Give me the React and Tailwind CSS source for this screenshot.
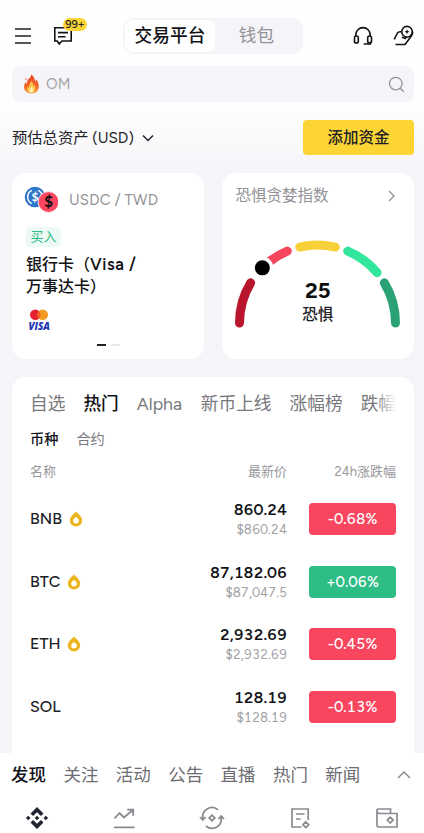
const GRAY = '#929297';

const polar = (deg) => {
  const a = (deg * Math.PI) / 180;
  return [82.5 - 78 * Math.cos(a), 86 - 78 * Math.sin(a)];
};
const arc = (from, to) => {
  const [x1, y1] = polar(from);
  const [x2, y2] = polar(to);
  return `M${x1} ${y1}A78 78 0 0 1 ${x2} ${y2}`;
};

function Gauge() {
  const segments = [
    [0, 31, '#b9152c'],
    [50, 67.2, '#f6465d'],
    [76.8, 103.2, '#f8d13a'],
    [112.8, 139.8, '#32e69b'],
    [149, 180, '#2ba275'],
  ];
  const [kx, ky] = polar(45);
  return (
    <svg width="165" height="92" viewBox="0 0 165 92" fill="none" className="block">
      {segments.map(([a, b, c]) => (
        <path key={c} d={arc(a, b)} stroke={c} strokeWidth="9" strokeLinecap="round" />
      ))}
      <circle cx={kx} cy={ky} r="11" fill="#fff" />
      <circle cx={kx} cy={ky} r="7.5" fill="#000" />
    </svg>
  );
}

function Header() {
  return (
    <header className="flex h-[36px] items-center pl-[14px] pr-[10px]">
      <svg width="18" height="18" viewBox="0 0 18 18" stroke="#202126" strokeWidth="1.6">
        <path d="M1 2h16M1 9h16M1 16h16" />
      </svg>
      <div className="relative ml-[21px] h-[20px] w-[20px]">
        <svg width="20" height="20" viewBox="0 0 20 20" fill="none" stroke="#111216" strokeWidth="1.6">
          <path d="M1.800 1.800h16.400v13.200h-9.200l-2.800 2.900-2-2.900H1.800zM5 6.600h10M5 10.700h7.500" />
        </svg>
        <span className="absolute left-[10px] top-[-8px] flex h-[13px] w-[24px] items-center justify-center rounded-full bg-[#fcd535] text-[11px] font-medium leading-none text-[#202126]">99+</span>
      </div>
      <div className="ml-[50px] flex h-[36px] w-[180px] rounded-[10px] bg-[#f5f4f8] p-[2px] text-[17.700px]">
        <div className="flex w-[90px] items-center justify-center rounded-[8px] bg-white font-medium text-[#111216]">交易平台</div>
        <div className="flex flex-1 items-center justify-center pr-[3px] text-[#929297]">钱包</div>
      </div>
      <svg className="ml-auto" width="20" height="20" viewBox="0 0 20 20" fill="none" stroke="#111216" strokeWidth="1.600">
        <path d="M2.800 10V8.800a7.200 7.200 0 0 1 14.400 0V10M17.300 15.800v2.200h-6.600" />
        <rect x="1.500" y="10" width="3.800" height="7" rx="1.800" />
        <rect x="14.700" y="10" width="3.800" height="7" rx="1.800" />
      </svg>
      <svg className="ml-[20px]" width="21" height="22" viewBox="0 0 21 22" fill="none" stroke="#111216" strokeWidth="1.600" strokeLinejoin="round">
        <path d="M1.200 14.300 4.500 8Q5.400 6.700 7 6.700h1.600M9 12.200l3.300 1.400 1.300-1.700M2.500 19.500H12l6.200-8.200q1.500-2.300 1.500-4.600" />
        <circle cx="14" cy="6.700" r="5.300" />
        <path d="m14 4.200.75 1.750 1.750.75-1.750.75L14 9.200l-.75-1.750-1.750-.75 1.750-.75z" fill="#111216" stroke="none" />
      </svg>
    </header>
  );
}

function SearchBar() {
  return (
    <div className="ml-[12px] mr-[10px] mt-[12px] flex h-[36px] items-center rounded-[8px] bg-[#f5f4f8] pl-[11px] pr-[9px]">
      <svg width="17" height="20" viewBox="0 0 17 20">
        <defs>
          <linearGradient id="flame" x1="0" y1="0" x2="0" y2="1">
            <stop offset="0" stopColor="#e84b2c" />
            <stop offset=".6" stopColor="#f4642b" />
            <stop offset="1" stopColor="#f89a35" />
          </linearGradient>
        </defs>
        <path d="M8 .5c3.400 2 3.600 4.600 4.200 7 .6-.6.8-1.400.8-2.200 2 2.400 3 5 2.800 7.500-.3 4-3.300 6.700-7.200 6.700S1 17 1 13.100c0-2.200.8-3.900 1.700-5.200.2.9.5 1.500 1 2C4 7 4.600 5.600 6.300 4.300 7.500 3.200 8.200 2 8 .5zM2.300 3.700l1.400 1.500-1.200 1.200z" fill="url(#flame)" />
        <path d="M8.200 7c2 1.900 1.600 3.500 2.300 4.700.6-.3.900-.9 1-1.500 2 3.900.8 8.500-3 8.500-3.700 0-5-3.200-3.800-6.300.4.700.8 1 1.300 1.100C5.800 10.800 7.500 9.500 8.200 7z" fill="#fcc544" />
        <path d="M8.500 12.500c1.800 2 2.800 6-.1 6-2.600 0-2.500-3-.6-4.200z" fill="#fff3ba" />
      </svg>
      <span className="ml-[6px] text-[15px] text-[#a4a4a9]">OM</span>
      <svg className="ml-auto" width="17" height="17" viewBox="0 0 17 17" fill="none" stroke={GRAY} strokeWidth="1.300">
        <circle cx="7.800" cy="7.600" r="6.300" />
        <path d="m12.300 12.200 3.500 3.500" />
      </svg>
    </div>
  );
}

function BuyCard() {
  return (
    <section className="flex h-[186px] w-[192px] flex-col rounded-[14px] bg-white pl-[14px] pt-[13px]">
      <div className="flex h-[29px] items-center">
        <svg width="34" height="29" viewBox="0 0 34 29" className="-ml-[2px]">
          <circle cx="11" cy="11" r="10.300" fill="#2f76ca" />
          <path d="M7.800 4.300a7.500 7.500 0 0 0 0 13.400M14.200 4.300a7.500 7.500 0 0 1 0 13.400" fill="none" stroke="#fff" strokeWidth="1.400" />
          <text x="11" y="15.300" textAnchor="middle" fontSize="12" fontWeight="700" fontFamily="Lato, sans-serif" fill="#fff">$</text>
          <circle cx="24.500" cy="16" r="10.400" fill="#fa465f" stroke="#fff" strokeWidth=".8" />
          <text x="24.500" y="21" textAnchor="middle" fontSize="15" fontWeight="900" fontFamily="Lato, sans-serif" fill="#111">$</text>
        </svg>
        <span className="ml-[11px] text-[15px] tracking-[.2px] text-[#929297]">USDC / TWD</span>
      </div>
      <div className="mt-[12px] flex h-[20px] w-[35px] items-center justify-center rounded-[4px] bg-[#edf9f4] text-[13px] text-[#2ebd85]">买入</div>
      <h2 className="mt-[6px] text-[16px] font-medium leading-[22px] text-[#111216]">银行卡（<span className="text-[16.500px] font-semibold tracking-[.55px]">Visa /</span><br />万事达卡）</h2>
      <svg className="ml-[1px] mt-[11px] shrink-0" width="25" height="24" viewBox="0 0 25 24">
        <circle cx="8.300" cy="5.700" r="5.300" fill="#e52330" />
        <circle cx="15.700" cy="5.700" r="5.300" fill="#f59a24" />
        <path d="M12 1.900a5.300 5.300 0 0 1 0 7.600 5.300 5.300 0 0 1 0-7.600z" fill="#f16022" />
        <text x="1.500" y="20.500" fontSize="10" fontWeight="800" fontStyle="italic" fontFamily="Open Sans, sans-serif" textLength="21.500" lengthAdjust="spacingAndGlyphs" fill="#2336b5">VISA</text>
      </svg>
      <div className="-ml-[14px] mt-[11px] flex justify-center gap-[5px]">
        <i className="h-[2px] w-[9px] bg-[#202126]" />
        <i className="h-[2px] w-[9px] bg-[#e7e7eb]" />
      </div>
    </section>
  );
}

function FearCard() {
  return (
    <section className="flex h-[186px] w-[192.500px] flex-col rounded-[14px] bg-white">
      <div className="flex h-[45px] items-center justify-between pl-[14px] pr-[18px] text-[15.500px] text-[#929297]">
        <span>恐惧贪婪指数</span>
        <svg width="9" height="14" viewBox="0 0 9 14" fill="none" stroke={GRAY} strokeWidth="1.400"><path d="m2 2 5 5-5 5" /></svg>
      </div>
      <div className="mt-[19px] flex flex-col items-center">
        <Gauge />
        <div className="-mt-[51px] flex flex-col items-center">
          <b className="text-[22px] font-bold leading-[26px] text-[#0c0d10]">25</b>
          <span className="text-[15.500px] font-medium leading-[22px] text-[#202126]">恐惧</span>
        </div>
      </div>
    </section>
  );
}

const coins = [
  ['BNB', '860.24', '$860.24', '-0.68%', true],
  ['BTC', '87,182.06', '$87,047.5', '+0.06%', true],
  ['ETH', '2,932.69', '$2,932.69', '-0.45%', true],
  ['SOL', '128.19', '$128.19', '-0.13%', false],
];

function CoinRow({ coin }) {
  const [name, price, usd, change, hot] = coin;
  return (
    <div className="flex h-[62.500px] items-center">
      <span className="text-[16px] font-medium text-[#202126]">{name}</span>
      {hot && (
        <svg className="ml-[7px]" width="14" height="16" viewBox="0 0 14 16">
          <path fillRule="evenodd" d="M7 .5c2 2.300 6.200 5 6.200 8.800a6.200 6.200 0 0 1-12.400 0C.8 5.500 5 2.800 7 .5zM7 5.800C6 7 4.200 8 4.200 9.700a2.800 2.800 0 0 0 5.600 0C9.800 8 8 7 7 5.800z" fill="#ecb51f" />
        </svg>
      )}
      <div className="ml-auto pt-px text-right tabular-nums">
        <div className="text-[15.800px] font-semibold leading-[21px] text-[#111216]">{price}</div>
        <div className="text-[13px] leading-[20px] text-[#a0a0a5]">{usd}</div>
      </div>
      <div className={`ml-[22px] flex h-[32px] w-[87px] items-center justify-center rounded-[4px] text-[15px] font-medium tabular-nums text-white ${change[0] === '+' ? 'bg-[#2ebd85]' : 'bg-[#f9465f]'}`}>{change}</div>
    </div>
  );
}

function Market() {
  return (
    <section className="ml-[12px] mr-[10px] mt-[18px] h-[376px] overflow-hidden rounded-t-[14px] bg-white px-[18px]">
      <div className="relative mt-[14px] flex h-[26px] items-center gap-[18px] overflow-hidden whitespace-nowrap text-[17.700px] text-[#78787d]">
        <span>自选</span>
        <span className="font-medium text-[#111216]">热门</span>
        <span className="w-[46px]">Alpha</span>
        <span>新币上线</span>
        <span>涨幅榜</span>
        <span>跌幅</span>
        <div className="absolute right-0 top-0 h-full w-[20px] bg-gradient-to-r from-white/0 to-white" />
      </div>
      <div className="mt-[13px] flex h-[20px] items-center gap-[18px] text-[14.200px] text-[#78787d]">
        <span className="font-medium text-[#111216]">币种</span>
        <span>合约</span>
      </div>
      <div className="mt-[13px] flex h-[18px] items-center text-[13px] text-[#98989d]">
        <span>名称</span>
        <span className="ml-auto">最新价</span>
        <span className="w-[109px] text-right">24h涨跌幅</span>
      </div>
      <div className="mt-[7px]">{coins.map((c) => <CoinRow key={c[0]} coin={c} />)}</div>
    </section>
  );
}

function BottomBar() {
  return (
    <footer className="h-[80px] bg-white">
      <div className="flex h-[44px] items-center gap-[17.400px] pl-[11px] pr-[12px] text-[17.500px] text-[#6d6d72]">
        <span className="font-medium text-[#111216]">发现</span>
        {['关注', '活动', '公告', '直播', '热门', '新闻'].map((t) => <span key={t}>{t}</span>)}
        <svg className="ml-auto" width="16" height="10" viewBox="0 0 16 10" fill="none" stroke="#85858a" strokeWidth="1.400"><path d="m2 8 6-6 6 6" /></svg>
      </div>
      <nav className="flex h-[36px] items-start justify-between pl-[25px] pr-[25px] pt-[9px] text-[#8a8a90]">
        <svg width="24" height="24" viewBox="0 0 24 24" fill="#202531">
          <path d="m12 1 6.500 6.500-2.600 2.600L12 6.200l-3.900 3.900-2.600-2.600zM12 23l6.500-6.500-2.600-2.600-3.900 3.900-3.900-3.900-2.600 2.600zM12 9.700l2.300 2.300-2.300 2.300L9.700 12zM3.200 9.700 5.500 12l-2.300 2.300L.9 12zM20.800 9.700l2.300 2.300-2.300 2.300-2.300-2.300z" />
        </svg>
        <svg width="24" height="24" viewBox="0 0 24 24" fill="none" stroke="currentColor" strokeWidth="1.800"><path d="M2 21.300h20.500M2.500 12.500l5-5.500 4.500 4.500L20.800 4M15.200 3.700h6v6" /></svg>
        <svg width="26" height="24" viewBox="0 0 26 24" fill="none" stroke="currentColor" strokeWidth="1.800">
          <path d="M19 3.900A9.200 9.200 0 0 0 3.800 12v2M1 11l2.800 3 2.800-3M7 20a9.200 9.200 0 0 0 15.200-8v-2M25 13l-2.800-3-2.800 3M13 9.200l2.800 2.800-2.800 2.800-2.800-2.800z" />
        </svg>
        <svg width="24" height="24" viewBox="0 0 24 24" fill="none" stroke="currentColor" strokeWidth="1.700"><path d="M20.200 14V3H4v18h9.500M8 8h8.500M8 13h4.500M17.800 15.800l2.900 2.900-2.900 2.900-2.900-2.900z" /></svg>
        <svg width="24" height="24" viewBox="0 0 24 24" fill="none" stroke="currentColor" strokeWidth="1.700"><path d="M15.500 7V3H3.200q-.8 0-1.200.7v16q0 1.300 1.300 1.300H22V7.500H4.500Q2.500 7.500 2 5.500M15.200 11.200l2.900 2.900-2.900 2.900-2.900-2.900z" /></svg>
      </nav>
    </footer>
  );
}

export default function App() {
  return (
    <div className="h-[833px] w-[424px] overflow-hidden bg-[#f5f4f8] bg-[linear-gradient(#fff_0px,#fefeff_105px,#f5f4f8_175px)] pt-[18px] font-['Figtree','Lato','Noto_Sans_CJK_SC',sans-serif]">
      <Header />
      <SearchBar />
      <div className="ml-[12px] mr-[10px] mt-[18px] flex h-[35px] items-center text-[15.300px] text-[#202126]">
        <span className="pt-px">预估总资产 (USD)</span>
        <svg className="ml-[8px]" width="12" height="8" viewBox="0 0 12 8" fill="none" stroke="currentColor" strokeWidth="1.500"><path d="m1 1.500 5 5 5-5" /></svg>
        <button className="ml-auto h-[35px] w-[111px] rounded-[4px] bg-[#fcd535] text-[15.500px] font-medium text-[#202126]">添加资金</button>
      </div>
      <div className="ml-[12px] mr-[10px] mt-[18px] flex justify-between">
        <BuyCard />
        <FearCard />
      </div>
      <Market />
      <BottomBar />
    </div>
  );
}
